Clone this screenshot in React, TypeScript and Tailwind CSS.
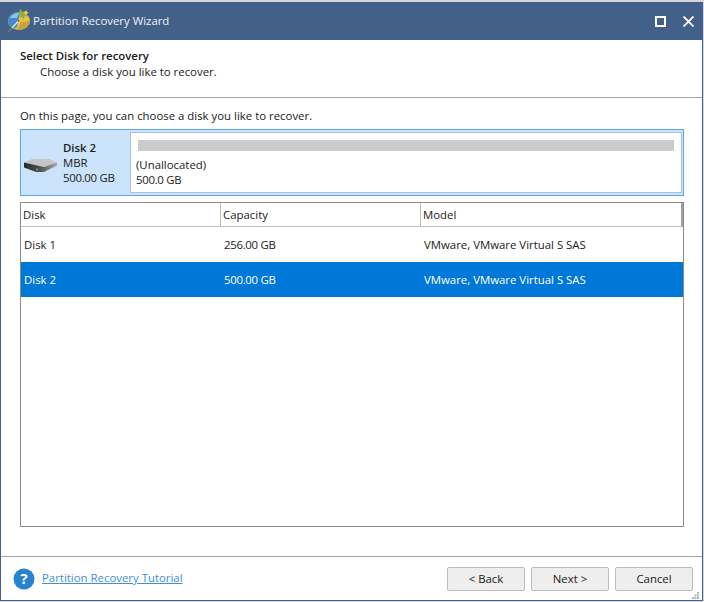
import React from "react";

function Logo() {
  return (
    <svg width="26" height="28" viewBox="0 0 26 28" className="shrink-0">
      <ellipse cx="12" cy="14" rx="11" ry="9" fill="#e3c24c" />
      <path d="M1 14 C1 9 6 5 13 5 L10 20 L6 22 C3 20 1 17 1 14Z" fill="#3f8dcf" />
      <path d="M3 11 C4 8 8 6 12 6 L10 11 Z" fill="#8cc3ea" />
      <path d="M14 15 C18 15 22 14 23 13 C23 18 18 23 10 23 Z" fill="#c9a23a" />
      <path d="M14 2 l1.500 3 3-1-1 3 4 1-4 1.500-.5 3-2-2.500-3 .5 1.500-3-1.500-3z" fill="#9aa83a" />
      <path d="M19 3 l1 2 2 .5-2 1-1 2-1-2-2-1 2-.5z" fill="#e9d25a" />
      <path d="M1 25 L12 13" stroke="#6f7378" strokeWidth="2" />
      <path d="M5 21 L11 14.500" stroke="#f2efe0" strokeWidth="1.200" />
    </svg>
  );
}

function DiskIcon() {
  return (
    <svg width="33" height="13" viewBox="0 0 33 13" className="mt-[5px] shrink-0">
      <defs>
        <linearGradient id="front" x1="0" x2="1" y1="0" y2="0">
          <stop offset="0" stopColor="#2a2c2e" />
          <stop offset="0.45" stopColor="#4a4c4e" />
          <stop offset="1" stopColor="#a5a7a9" />
        </linearGradient>
      </defs>
      <path d="M0 3.500 L8 0 H25 L33 3.500 L20 8 Z" fill="#c4c5c6" />
      <path d="M0 3.500 L20 8 L33 3.500 V6.500 L20 13 H12 L0 8.500 Z" fill="url(#front)" />
      <rect x="12" y="9.500" width="2" height="2" fill="#39c24a" />
    </svg>
  );
}

function Row({ a, b, c, selected }: { a: string; b: string; c: string; selected?: boolean }) {
  return (
    <div className={`flex h-[35px] items-center ${selected ? "bg-[#0078d7] text-white" : "text-[#1a1a1a]"}`}>
      <div className="w-[200px] pl-[3px]">{a}</div>
      <div className="w-[200px] pl-[3px] tracking-[-0.3px]">{b}</div>
      <div className="pl-[3px]">{c}</div>
    </div>
  );
}

function Btn({ children }: { children: React.ReactNode }) {
  return (
    <button className="flex h-[24px] w-[78px] items-center justify-center rounded-[2px] border border-[#bdbdbd] bg-[#eeeeee] text-[#1a1a1a]">
      {children}
    </button>
  );
}

export default function App() {
  return (
    <div
      className="flex h-[602px] w-[704px] flex-col bg-[#d6d6da] pt-[2px] pr-[1px] pb-[1px] text-[11.4px] leading-[15px] text-[#1a1a1a]"
      style={{ fontFamily: '"Open Sans","Noto Sans",sans-serif' }}
    >
      <div className="flex min-h-0 flex-1 flex-col border-x border-b border-[#44618b] bg-white">
        <div className="flex h-[38px] shrink-0 items-center bg-[#436088] pl-[6px] text-white">
          <Logo />
          <span className="mb-[2px] text-[#f0f3f7]">Partition Recovery Wizard</span>
          <div className="ml-auto flex items-center gap-[17px] pr-[8px]">
            <div className="h-[11px] w-[11px] border-2 border-white" />
            <svg width="11" height="11" viewBox="0 0 11 11">
              <path d="M0.500 0.500 L10.500 10.500 M10.500 0.500 L0.500 10.500" stroke="white" strokeWidth="1.800" />
            </svg>
          </div>
        </div>

        <div className="h-[58px] shrink-0 border-b border-[#a0a0a0] pt-[8px] pl-[19px]">
          <div className="font-semibold">Select Disk for recovery</div>
          <div className="mt-[1px] pl-[20px]">Choose a disk you like to recover.</div>
        </div>

        <div className="flex min-h-0 flex-1 flex-col pt-[10px] pr-[18px] pl-[19px]">
          <div className="leading-[16px]">On this page, you can choose a disk you like to recover.</div>

          <div className="mt-[5px] flex h-[67px] shrink-0 border border-[#5aa7ea] bg-[#cce4fb]">
            <div className="flex w-[109px] shrink-0 items-center pl-[3px]">
              <DiskIcon />
              <div className="ml-[6px]">
                <div className="font-semibold">Disk 2</div>
                <div>MBR</div>
                <div className="tracking-[-0.3px]">500.00 GB</div>
              </div>
            </div>
            <div className="my-[2px] mr-[1px] flex-1 border border-[#a9c1dd] bg-white px-[7px] pt-[7px]">
              <div className="h-[11px] bg-[#cccccc]" />
              <div className="mt-[6px] -ml-[2px]">(Unallocated)</div>
              <div className="-ml-[2px] tracking-[-0.3px]">500.0 GB</div>
            </div>
          </div>

          <div className="mt-[6px] flex min-h-0 flex-1 flex-col border border-[#8a8a92]">
            <div className="flex h-[24px] shrink-0 items-center border-r-2 border-b border-[#bdbdbd] border-r-[#a0a0a0]">
              <div className="w-[200px] self-stretch border-r border-[#bdbdbd] pt-[4px] pl-[2px]">Disk</div>
              <div className="w-[200px] self-stretch border-r border-[#bdbdbd] pt-[4px] pl-[2px]">Capacity</div>
              <div className="self-stretch pt-[4px] pl-[2px]">Model</div>
            </div>
            <Row a="Disk 1" b="256.00 GB" c="VMware, VMware Virtual S SAS" />
            <Row a="Disk 2" b="500.00 GB" c="VMware, VMware Virtual S SAS" selected />
          </div>
        </div>

        <div className="relative mt-[29px] flex h-[44px] shrink-0 items-center border-t border-[#a0a0a0] pr-[9px] pl-[12px]">
          <svg width="22" height="22" viewBox="0 0 22 22" className="mt-[1px] shrink-0">
            <circle cx="11" cy="11" r="10.500" fill="#2a82cc" />
            <text x="11" y="16" textAnchor="middle" fontSize="15" fontWeight="700" fill="white" fontFamily="Open Sans, sans-serif">?</text>
          </svg>
          <a className="mb-[2px] ml-[7px] text-[#3f8ee0] underline" href="#">Partition Recovery Tutorial</a>
          <div className="ml-auto flex gap-[6px]">
            <Btn>&lt; Back</Btn>
            <Btn>Next &gt;</Btn>
            <Btn>Cancel</Btn>
          </div>
          <svg width="7" height="7" viewBox="0 0 7 7" className="absolute right-[3px] bottom-[1px]">
            <path d="M5 0h2v2H5zM2.500 2.500h2v2h-2zM5 2.500h2v2H5zM0 5h2v2H0zM2.500 5h2v2h-2zM5 5h2v2H5z" fill="#b4b4b4" />
          </svg>
        </div>
      </div>
    </div>
  );
}
